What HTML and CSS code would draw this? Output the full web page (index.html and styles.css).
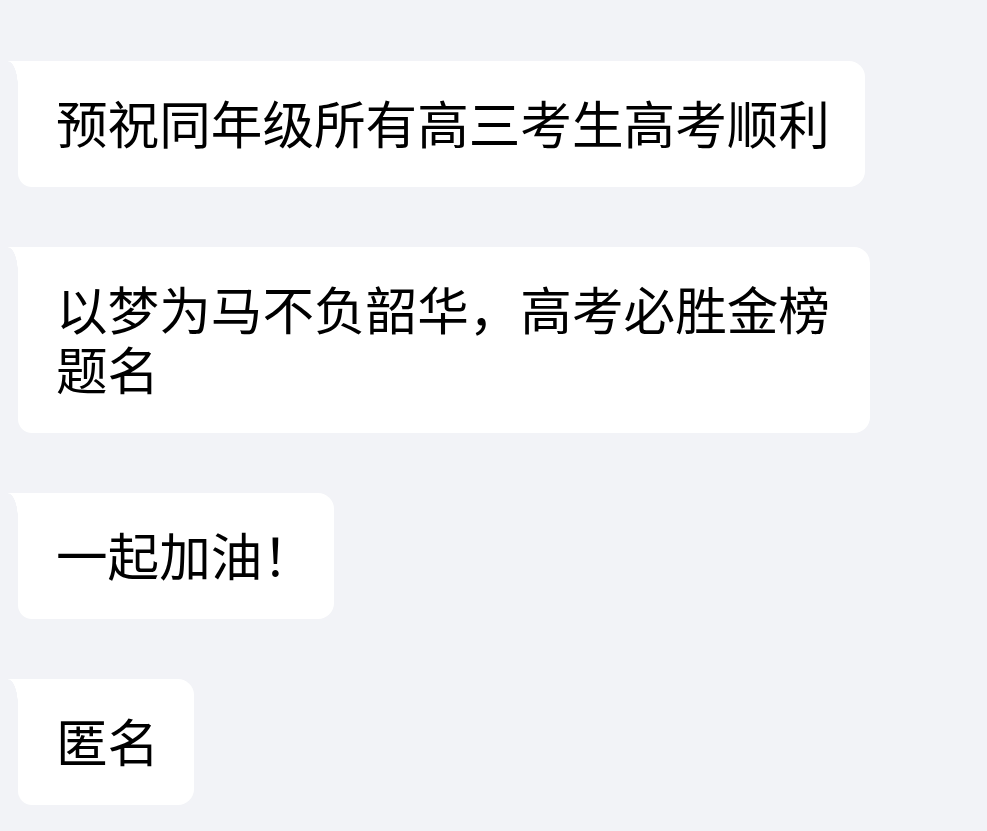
FILE: index.html
```html
<!DOCTYPE html>
<html lang="zh-CN">
<head>
    <meta charset="UTF-8">
    <meta name="viewport" content="width=device-width, initial-scale=1.0">
    <title>消息</title>
    <link rel="stylesheet" href="styles.css">
</head>
<body>
    <div class="chatList">
        <div class="bubble">预祝同年级所有高三考生高考顺利</div>
        <div class="bubble">以梦为马不负韶华，高考必胜金榜题名</div>
        <div class="bubble">一起加油<span class="punct">！</span></div>
        <div class="bubble">匿名</div>
    </div>
</body>
</html>
```

FILE: styles.css
```css
body {
    margin: 0;
    background-color: #f2f3f7;
    font-family: "Noto Sans CJK SC", "Noto Sans", sans-serif;
    color: #000;
}

.chatList {
    display: flex;
    flex-direction: column;
    align-items: flex-start;
    gap: 60px;
    padding: 61px 0 0 18px;
}

.bubble {
    position: relative;
    box-sizing: border-box;
    max-width: 852px;
    padding: 31px 35px 35px 38px;
    background: #fff;
    border-radius: 0 16px 16px 14px;
    font-size: 51.6px;
    line-height: 60px;
}

/* little tail on the top left corner */
.bubble::before {
    content: "";
    position: absolute;
    left: -10px;
    top: 0;
    width: 10px;
    height: 26px;
    background: radial-gradient(ellipse 10px 26px at 0 100%, transparent 97%, #fff 100%);
}

/* full width mark is narrower in the original */
.punct {
    letter-spacing: -15px;
}
```
